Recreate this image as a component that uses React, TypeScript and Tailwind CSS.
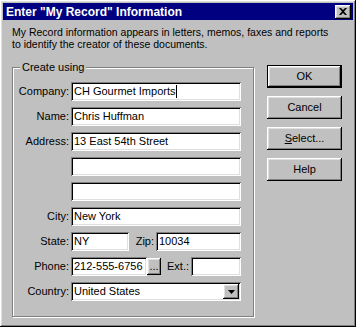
import React from 'react';

const raised =
  'shadow-[inset_-1px_-1px_#000,inset_1px_1px_#fff,inset_-2px_-2px_#808080,inset_2px_2px_#dfdfdf]';
const sunken =
  'shadow-[inset_1px_1px_#808080,inset_-1px_-1px_#fff,inset_2px_2px_#000,inset_-2px_-2px_#dfdfdf]';

function Field({ value, className = '', caret = false }: { value?: string; className?: string; caret?: boolean }) {
  return (
    <div className={`h-[19px] bg-white ${sunken} flex items-center pl-[3px] pr-[2px] overflow-hidden ${className}`}>
      <span className="whitespace-nowrap leading-none">{value}</span>
      {caret && <span className="w-px h-[13px] bg-black ml-px" />}
    </div>
  );
}

function Label({ children, className = 'w-[58px]' }: { children: React.ReactNode; className?: string }) {
  return <div className={`${className} text-right pr-[2px] shrink-0`}>{children}</div>;
}

function Button({ children, isDefault = false }: { children: React.ReactNode; isDefault?: boolean }) {
  return (
    <div
      className={`h-[23px] w-[75px] flex items-center justify-center bg-[#c0c0c0] ${
        isDefault
          ? 'shadow-[inset_0_0_0_1px_#000,inset_-2px_-2px_#000,inset_2px_2px_#fff,inset_-3px_-3px_#808080,inset_3px_3px_#dfdfdf]'
          : raised
      }`}
    >
      {children}
    </div>
  );
}

export default function App() {
  return (
    <div
      className={`w-[356px] h-[327px] bg-[#c0c0c0] p-[3px] text-[11px] text-black ${raised}`}
      style={{ fontFamily: '"Liberation Sans", Arial, sans-serif' }}
    >
      <div className="h-[17px] bg-[#000080] flex items-center justify-between pl-[3px] pr-[2px]">
        <span className="text-white font-bold text-[12px] leading-none whitespace-nowrap">
          Enter "My Record" Information
        </span>
        <div className={`w-[16px] h-[14px] bg-[#c0c0c0] ${raised} flex items-center justify-center`}>
          <svg width="8" height="7" viewBox="0 0 8 7">
            <path d="M0 0h2l2 2 2-2h2L5 3.5 8 7H6L4 5 2 7H0l3-3.5z" fill="#000" />
          </svg>
        </div>
      </div>

      <div className="px-[9px] pt-[6px]">
        <p className="leading-[12px] text-[10.5px]">
          My Record information appears in letters, memos, faxes and reports
          <br />
          to identify the creator of these documents.
        </p>

        <div className="flex mt-[11px]">
          <fieldset className="w-[242px] h-[256px] border border-[#808080] shadow-[inset_1px_1px_#fff,1px_1px_#fff] pr-[12px]">
            <legend className="ml-[7px] px-[2px] bg-[#c0c0c0] leading-[13px]">Create using</legend>
            <div className="flex flex-col gap-[6px] mt-[8px]">
              <div className="flex items-center">
                <Label>Company:</Label>
                <Field value="CH Gourmet Imports" caret className="flex-1" />
              </div>
              <div className="flex items-center">
                <Label>Name:</Label>
                <Field value="Chris Huffman" className="flex-1" />
              </div>
              <div className="flex items-center">
                <Label>Address:</Label>
                <Field value="13 East 54th Street" className="flex-1" />
              </div>
              <div className="flex items-center">
                <Label> </Label>
                <Field className="flex-1" />
              </div>
              <div className="flex items-center">
                <Label> </Label>
                <Field className="flex-1" />
              </div>
              <div className="flex items-center">
                <Label>City:</Label>
                <Field value="New York" className="flex-1" />
              </div>
              <div className="flex items-center">
                <Label>State:</Label>
                <Field value="NY" className="w-[58px]" />
                <Label className="w-[27px]">Zip:</Label>
                <Field value="10034" className="flex-1" />
              </div>
              <div className="flex items-center">
                <Label>Phone:</Label>
                <Field value="212-555-6756" className="w-[76px]" />
                <div className={`w-[14px] h-[17px] bg-[#c0c0c0] ${raised} flex items-end justify-center pb-[3px] leading-none`}>
                  ...
                </div>
                <Label className="w-[30px]">Ext.:</Label>
                <Field className="flex-1" />
              </div>
              <div className="flex items-center">
                <Label>Country:</Label>
                <div className={`flex-1 h-[19px] bg-white ${sunken} flex items-center pl-[3px] pr-[2px]`}>
                  <span className="flex-1 whitespace-nowrap">United States</span>
                  <div className={`w-[16px] h-[15px] bg-[#c0c0c0] ${raised} flex items-center justify-center`}>
                    <svg width="7" height="4" viewBox="0 0 7 4">
                      <path d="M0 0h7L3.5 4z" fill="#000" />
                    </svg>
                  </div>
                </div>
              </div>
            </div>
          </fieldset>

          <div className="ml-[13px] mt-[4px] flex flex-col gap-[8px]">
            <Button isDefault>OK</Button>
            <Button>Cancel</Button>
            <Button>
              <span>
                <span className="underline">S</span>elect...
              </span>
            </Button>
            <Button>Help</Button>
          </div>
        </div>
      </div>
    </div>
  );
}
